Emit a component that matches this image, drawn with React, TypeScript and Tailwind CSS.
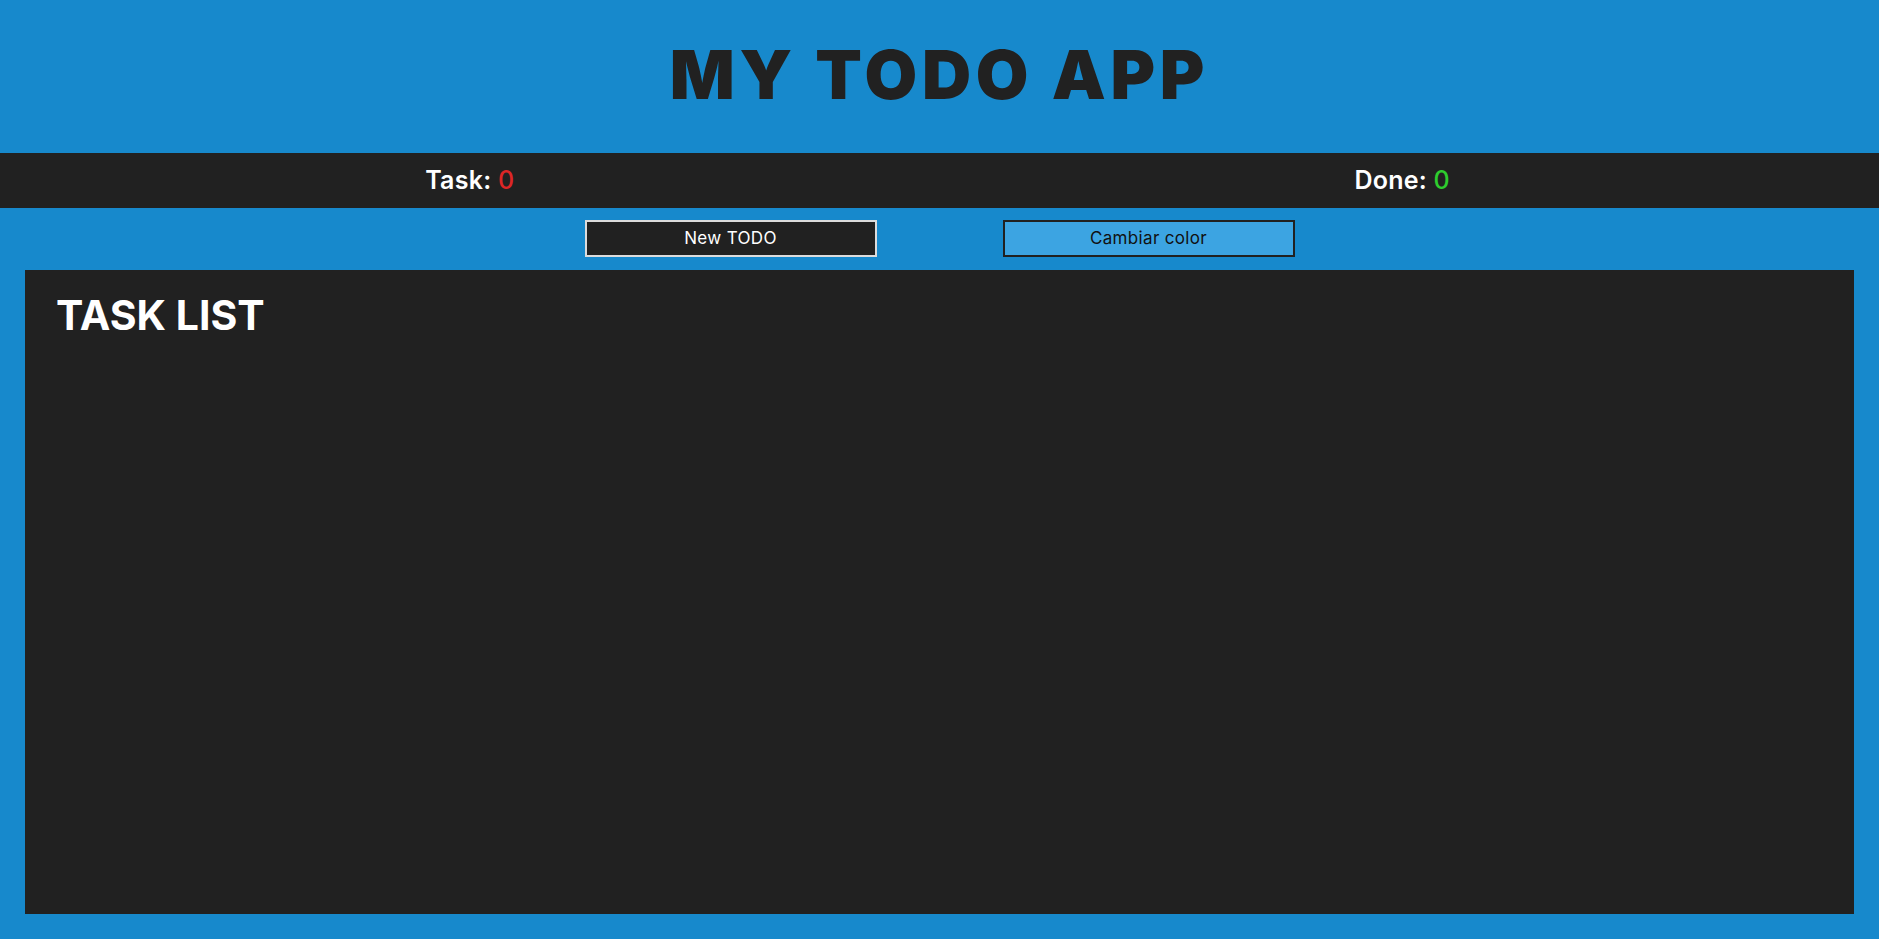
export default function App() {
  return (
    <div
      className="h-screen flex flex-col bg-[#1789cc]"
      style={{ fontFamily: "Inter, 'Noto Sans', sans-serif" }}
    >
      <header className="h-[153px] flex items-center justify-center pb-[6px] shrink-0">
        <h1 className="text-[68px] font-black text-[#212121] tracking-[0.07em] leading-none">
          MY TODO APP
        </h1>
      </header>
      <div className="h-[55px] grid grid-cols-2 bg-[#212121] shrink-0">
        <div className="flex items-center justify-center text-[25px] font-semibold text-white tracking-[0.01em]">
          Task:&nbsp;<span className="text-[#dd2626] font-medium">0</span>
        </div>
        <div className="flex items-center justify-center pr-[14px] text-[25px] font-semibold text-white tracking-[0.01em]">
          Done:&nbsp;<span className="text-[#2ecc2e] font-medium">0</span>
        </div>
      </div>
      <div className="flex justify-center gap-[126px] mt-[12px] shrink-0">
        <button className="w-[292px] h-[37px] bg-[#212121] border-2 border-[#dcdcdc] text-white text-[17px] tracking-[0.02em]">
          New TODO
        </button>
        <button className="w-[292px] h-[37px] bg-[#3ca4e2] border-2 border-[#212121] text-[#111] text-[17px] tracking-[0.02em]">
          Cambiar color
        </button>
      </div>
      <main className="flex-1 mx-[25px] mt-[13px] mb-[25px] bg-[#212121] px-[31px] pt-[20px]">
        <h2 className="text-[41px] font-bold text-white leading-tight">TASK LIST</h2>
      </main>
    </div>
  );
}
